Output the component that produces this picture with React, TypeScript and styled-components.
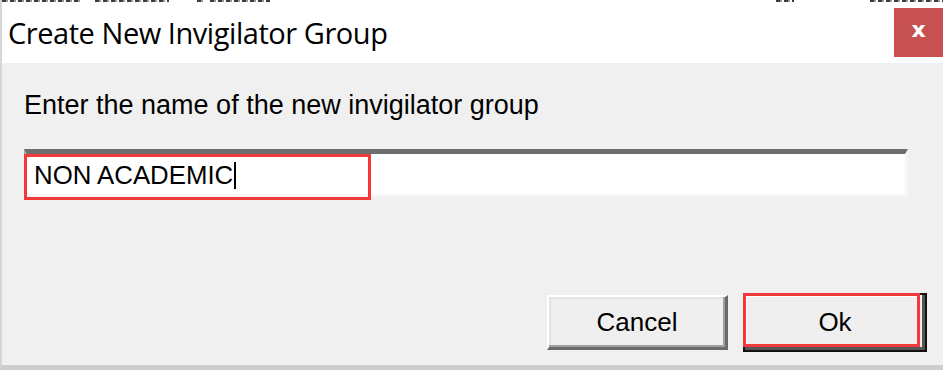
import styled, { createGlobalStyle } from 'styled-components';

const GlobalStyle = createGlobalStyle`
  html, body {
    margin: 0;
    padding: 0;
    background: #ffffff;
  }
  body {
    width: 943px;
    height: 370px;
    overflow: hidden;
    font-family: "Liberation Sans", Arial, sans-serif;
  }
`;

// bits of the window behind the dialog, clipped to a few pixels at the top
const behindBits = [
  { width: 80, gap: 13 },
  { width: 74, gap: 28 },
  { width: 6, gap: 7 },
  { width: 60, gap: 506 },
  { width: 18, gap: 76 },
  { width: 76, gap: 0 },
];

export default function App() {
  return (
    <>
      <GlobalStyle />
      <Window>
        <BehindStrip>
          {behindBits.map((b, i) => (
            <BehindBit key={i} $width={b.width} $gap={b.gap} />
          ))}
        </BehindStrip>
        <TitleBar>
          <Title>Create New Invigilator Group</Title>
          <CloseButton type='button' aria-label='close'>
            x
          </CloseButton>
        </TitleBar>
        <Body>
          <Label>Enter the name of the new invigilator group</Label>
          <InputWrap>
            <NameInput>
              NON ACADEMIC
              <Caret />
            </NameInput>
            <Highlight $width={347} $height={46} $bottom={-3} />
          </InputWrap>
          <ButtonRow>
            <CancelButton type='button'>Cancel</CancelButton>
            <OkWrap>
              <OkButton type='button'>Ok</OkButton>
              <Highlight $width={177} $height={54} $bottom={5} />
            </OkWrap>
          </ButtonRow>
        </Body>
      </Window>
    </>
  );
}

const Window = styled.div`
  width: 943px;
  height: 370px;
  box-sizing: border-box;
  display: flex;
  flex-direction: column;
  background: #f0f0f0;
  border-left: 2px solid #d6d6d6;
  border-bottom: 5px solid #cdcdcd;
`;

const BehindStrip = styled.div`
  height: 3px;
  display: flex;
  overflow: hidden;
  background: #ffffff;
`;

const BehindBit = styled.span<{ $width: number; $gap: number }>`
  flex: none;
  width: ${(p) => p.$width}px;
  height: 2px;
  margin-right: ${(p) => p.$gap}px;
  background: repeating-linear-gradient(
    90deg,
    #3c3c3c 0 4px,
    #9a9a9a 4px 6px,
    transparent 6px 8px
  );
`;

const TitleBar = styled.div`
  height: 60px;
  display: flex;
  align-items: flex-start;
  justify-content: space-between;
  background: #ffffff;
`;

const Title = styled.div`
  padding: 12px 0 0 6px;
  font-family: "Open Sans", "Noto Sans", sans-serif;
  font-size: 29px;
  line-height: 36px;
  color: #000000;
  letter-spacing: -0.45px;
`;

const CloseButton = styled.button`
  margin-top: 5px;
  width: 49px;
  height: 49px;
  border: none;
  padding: 0 0 6px;
  background: #c75050;
  color: #ffffff;
  font-family: "DejaVu Sans", sans-serif;
  font-size: 22px;
  font-weight: 700;
  line-height: 1;
`;

const Body = styled.div`
  flex: 1;
  display: flex;
  flex-direction: column;
  padding: 27px 35px 0 22px;
`;

const Label = styled.div`
  font-size: 27px;
  line-height: 30px;
  color: #000000;
`;

const InputWrap = styled.div`
  position: relative;
  margin-top: 29px;
  width: 884px;
`;

const NameInput = styled.div`
  box-sizing: border-box;
  height: 48px;
  display: flex;
  align-items: center;
  padding: 2px 0 0 7px;
  background: #ffffff;
  border-style: solid;
  border-width: 5px 3px 3px 3px;
  border-color: #6e6e6e #f6f6f6 #f6f6f6 #a8a8a8;
  box-shadow: inset 0 -2px 0 #ffffff, inset -2px 0 0 #ffffff;
  font-size: 25.8px;
  color: #000000;
  white-space: pre;
`;

const Caret = styled.span`
  display: inline-block;
  width: 2px;
  height: 27px;
  margin-left: 1px;
  background: #000000;
`;

const Highlight = styled.div<{ $width: number; $height: number; $bottom: number }>`
  position: absolute;
  left: 0;
  bottom: ${(p) => p.$bottom}px;
  width: ${(p) => p.$width}px;
  height: ${(p) => p.$height}px;
  box-sizing: border-box;
  border: 3px solid #f23a3a;
  pointer-events: none;
`;

const ButtonRow = styled.div`
  margin-top: auto;
  margin-bottom: 13px;
  margin-right: -19px;
  display: flex;
  align-items: center;
  justify-content: flex-end;
  gap: 15px;
`;

const CancelButton = styled.button`
  width: 181px;
  height: 55px;
  box-sizing: border-box;
  padding: 0;
  background: #efefef;
  border-style: solid;
  border-width: 2px 3px 3px 2px;
  border-color: #ffffff #6a6a6a #6a6a6a #ffffff;
  box-shadow: inset -2px -2px 0 #a0a0a0, inset 2px 2px 0 #e3e3e3;
  font-family: "Liberation Sans", Arial, sans-serif;
  font-size: 26px;
  color: #000000;
`;

const OkWrap = styled.div`
  position: relative;
`;

const OkButton = styled.button`
  display: block;
  width: 184px;
  height: 59px;
  box-sizing: border-box;
  padding: 0;
  background: #efefef;
  border: 2px solid #111111;
  box-shadow: inset -3px -3px 0 #555555, inset 2px 2px 0 #ffffff;
  font-family: "Liberation Sans", Arial, sans-serif;
  font-size: 26px;
  color: #000000;
`;
